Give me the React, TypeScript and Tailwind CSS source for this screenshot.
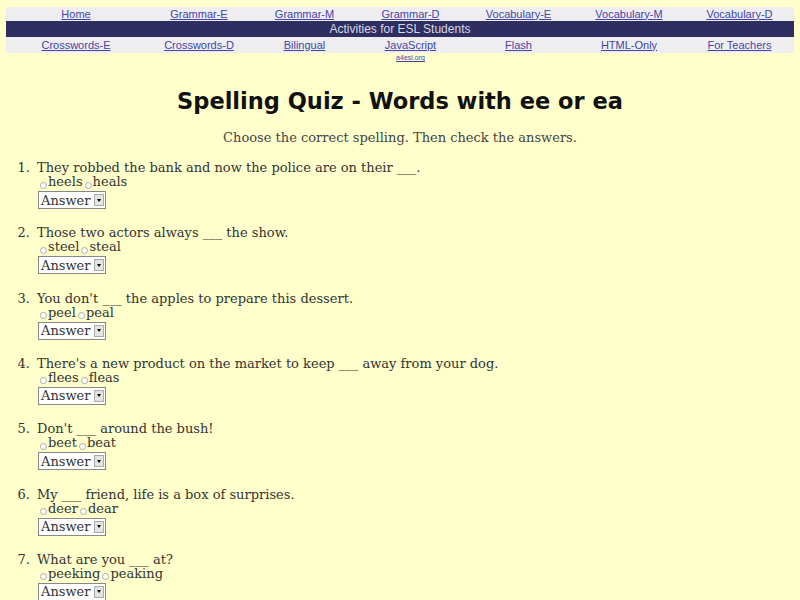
const row1 = ['Home', 'Grammar-E', 'Grammar-M', 'Grammar-D', 'Vocabulary-E', 'Vocabulary-M', 'Vocabulary-D'];
const row3 = ['Crosswords-E', 'Crosswords-D', 'Bilingual', 'JavaScript', 'Flash', 'HTML-Only', 'For Teachers'];

const questions = [
  { q: 'They robbed the bank and now the police are on their ___.', a: ['heels', 'heals'] },
  { q: 'Those two actors always ___ the show.', a: ['steel', 'steal'] },
  { q: "You don't ___ the apples to prepare this dessert.", a: ['peel', 'peal'] },
  { q: "There's a new product on the market to keep ___ away from your dog.", a: ['flees', 'fleas'] },
  { q: "Don't ___ around the bush!", a: ['beet', 'beat'] },
  { q: 'My ___ friend, life is a box of surprises.', a: ['deer', 'dear'] },
  { q: 'What are you ___ at?', a: ['peeking', 'peaking'] },
];

const cols = 'grid grid-cols-[140px_106px_105px_107px_109px_112px_109px]';

function Radio() {
  return <span className="inline-block w-[7px] h-[7px] rounded-full border border-[#aaa] bg-white mr-[1px] translate-y-[3px]" />;
}

function Select() {
  return (
    <div className="flex items-center w-[68px] h-[18px] border border-[#888] bg-white pl-[2px]">
      <span className="text-[13px] leading-none text-[#333]">Answer</span>
      <span className="ml-auto mr-[1px] w-[10px] h-[12px] bg-[#e4e4e4] border border-[#aaa] flex items-center justify-center">
        <span className="w-0 h-0 border-l-[2.5px] border-r-[2.5px] border-t-[3px] border-l-transparent border-r-transparent border-t-black" />
      </span>
    </div>
  );
}

export default function App() {
  return (
    <div className="min-h-[600px] bg-[#ffffcc] pt-[7px] overflow-hidden" style={{ fontFamily: '"DejaVu Serif", serif' }}>
      <div className="mx-[6px] text-[11px]" style={{ fontFamily: '"Liberation Sans", Arial, sans-serif' }}>
        <div className={`${cols} bg-[#eeeef0] h-[14px] items-center`}>
          {row1.map((l) => (
            <a key={l} className="text-center underline text-[#4444a8] leading-none">{l}</a>
          ))}
        </div>
        <div className="bg-[#2e2e60] h-[16px] flex items-center justify-center text-[12px] text-[#d8d8e8]">
          Activities for ESL Students
        </div>
        <div className={`${cols} bg-[#eeeef0] h-[16px] items-center`}>
          {row3.map((l) => (
            <a key={l} className="text-center underline text-[#4444a8] leading-none">{l}</a>
          ))}
        </div>
        <div className={`${cols} h-[10px]`}>
          <span /><span /><span />
          <a className="text-center underline text-[#4444a8] text-[7px] leading-[10px]">a4esl.org</a>
        </div>
      </div>

      <h1 className="text-center text-[22.5px] font-bold text-[#111] mt-[23px] leading-[30px]" style={{ fontFamily: '"DejaVu Sans", sans-serif' }}>
        Spelling Quiz - Words with ee or ea
      </h1>
      <p className="text-center text-[13px] text-[#444] mt-[14px] leading-[16px]">
        Choose the correct spelling. Then check the answers.
      </p>

      <div className="mt-[15px] flex flex-col gap-[17.33px] text-[13px] text-[#333]">
        {questions.map((item, i) => (
          <div key={i} className="flex">
            <span className="w-[31px] text-right pr-[1px] leading-[14px] h-[14px]">{i + 1}.</span>
            <div className="pl-[6px] flex flex-col">
              <div className="leading-[14px] h-[14px] whitespace-nowrap">{item.q}</div>
              <div className="leading-[14px] h-[14px] flex items-center pl-[3px] gap-[2px]">
                {item.a.map((w) => (
                  <span key={w} className="flex items-center">
                    <Radio />
                    <span>{w}</span>
                  </span>
                ))}
              </div>
              <div className="mt-[2px] pl-[1px]">
                <Select />
              </div>
            </div>
          </div>
        ))}
      </div>
    </div>
  );
}
